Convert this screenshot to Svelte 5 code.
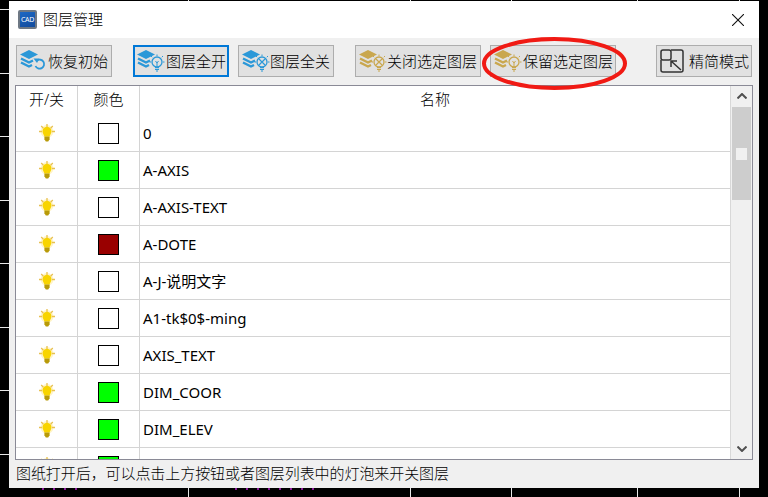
<script lang="ts">
	const gridX = [188, 410, 511, 637, 739];
	const gridY = [9, 73, 136, 200, 263, 327, 390, 454];

	const GREEN = '#00ff00';
	const layers = [
		{ color: '#ffffff', name: '0' },
		{ color: GREEN, name: 'A-AXIS' },
		{ color: '#ffffff', name: 'A-AXIS-TEXT' },
		{ color: '#990000', name: 'A-DOTE' },
		{ color: '#ffffff', name: 'A-J-说明文字' },
		{ color: '#ffffff', name: 'A1-tk$0$-ming' },
		{ color: '#ffffff', name: 'AXIS_TEXT' },
		{ color: GREEN, name: 'DIM_COOR' },
		{ color: GREEN, name: 'DIM_ELEV' },
		{ color: GREEN, name: '' }
	];

	const BLUE = '#2b98d8';
	const GOLD = '#c9a74e';
</script>

{#snippet stack(c)}
	<path d="M9 1 L18 5.5 L9 10 L0 5.5 Z" fill={c} />
	<path d="M1 9.5 L9 13.5 L13 11.5" fill="none" stroke={c} stroke-width="2.4" />
	<path d="M1 13.5 L9 17.5 L12 16" fill="none" stroke={c} stroke-width="2.4" />
{/snippet}

{#snippet bulbBadge(c, crossed)}
	<circle cx="20" cy="13" r="5" fill="none" stroke={c} stroke-width="1.3" />
	<path d="M18 18.5 H22 M18 20.3 H22 M19 22 H21" stroke={c} stroke-width="1.2" />
	{#if crossed}
		<path d="M17 10 L23 16 M23 10 L17 16" stroke={c} stroke-width="1.2" />
	{:else}
		<path d="M18.5 12 L20 14 L21.5 12 M20 14 V18" fill="none" stroke={c} stroke-width="1" />
	{/if}
	<path d="M20 5.5 V7 M14 7 L15.2 8.2 M26 7 L24.8 8.2 M12.5 13 H14 M26 13 H27.5" stroke={c} stroke-width="1" />
{/snippet}

{#snippet bulb()}
	<svg class="bulb" viewBox="0 0 16 18" width="16" height="18" aria-hidden="true">
		<circle cx="8" cy="7.5" r="6.5" fill="#fff4c8" />
		<path d="M8 0 V3 M2.2 2 L4.4 4.2 M13.8 2 L11.6 4.2 M0 7.5 H3 M13 7.5 H16" stroke="#e8c050" stroke-width="1.3" />
		<path d="M8 2.8 C5 2.8 3.5 5 3.5 7.2 C3.5 9.4 5 10.4 5.4 12.5 H10.6 C11 10.4 12.5 9.4 12.5 7.2 C12.5 5 11 2.8 8 2.8 Z" fill="#f8d400" />
		<path d="M5.4 12.5 H10.6 V15.2 L9.2 17.5 H6.8 L5.4 15.2 Z" fill="#b89a08" />
	</svg>
{/snippet}

<div class="desk">
	{#each gridX as x}
		<i class="vline" style="left: {x}px"></i>
	{/each}
	{#each gridY as y}
		<i class="hline" style="top: {y}px"></i>
	{/each}
	<i class="cut" style="left: 42px; width: 42px"></i>
	<i class="cut" style="left: 235px; width: 87px"></i>

	<div class="window">
		<header class="titlebar">
			<span class="logo">CAD</span>
			<span class="title">图层管理</span>
			<svg class="close" viewBox="0 0 12 12" width="12" height="12" aria-hidden="true">
				<path d="M0 0 L12 12 M12 0 L0 12" stroke="#111" stroke-width="1.1" />
			</svg>
		</header>

		<div class="toolbar">
			<button class="tool">
				<svg viewBox="0 0 28 24" width="28" height="24" aria-hidden="true">
					{@render stack(BLUE)}
					<path d="M17 11.5 A4.5 4.5 0 1 1 15.5 17" fill="none" stroke={BLUE} stroke-width="1.8" />
					<path d="M13.5 9.5 L19.5 9.5 L17 14 Z" fill={BLUE} />
				</svg>
				<span>恢复初始</span>
			</button>
			<button class="tool active gap-l">
				<svg viewBox="0 0 28 24" width="28" height="24" aria-hidden="true">
					{@render stack(BLUE)}
					{@render bulbBadge(BLUE, false)}
				</svg>
				<span>图层全开</span>
			</button>
			<button class="tool gap-s">
				<svg viewBox="0 0 28 24" width="28" height="24" aria-hidden="true">
					{@render stack(BLUE)}
					{@render bulbBadge(BLUE, true)}
				</svg>
				<span>图层全关</span>
			</button>
			<button class="tool wide gap-l">
				<svg viewBox="0 0 28 24" width="28" height="24" aria-hidden="true">
					{@render stack(GOLD)}
					{@render bulbBadge(GOLD, true)}
				</svg>
				<span>关闭选定图层</span>
			</button>
			<button class="tool wide gap-s">
				<svg viewBox="0 0 28 24" width="28" height="24" aria-hidden="true">
					{@render stack(GOLD)}
					{@render bulbBadge(GOLD, false)}
				</svg>
				<span>保留选定图层</span>
			</button>
			<button class="tool push">
				<svg viewBox="0 0 24 24" width="24" height="24" aria-hidden="true">
					<path d="M11 1 H21 Q23 1 23 3 V21 Q23 23 21 23 H3 Q1 23 1 21 V11" fill="none" stroke="#333" stroke-width="1.5" />
					<rect x="1" y="1" width="10" height="10" rx="2" fill="none" stroke="#333" stroke-width="1.5" />
					<path d="M11 18 V12 H17 M11 12 L21 21" fill="none" stroke="#333" stroke-width="1.5" />
				</svg>
				<span>精简模式</span>
			</button>
		</div>

		<div class="table">
			<div class="list">
				<div class="row head">
					<span class="cell">开/关</span>
					<span class="cell">颜色</span>
					<span class="cell">名称</span>
				</div>
				{#each layers as layer}
					<div class="row">
						<span class="cell">{@render bulb()}</span>
						<span class="cell"><i class="swatch" style="background: {layer.color}"></i></span>
						<span class="cell name">{layer.name}</span>
					</div>
				{/each}
			</div>
			<div class="scrollbar">
				<svg class="chev" viewBox="0 0 10 6" width="10" height="6" aria-hidden="true">
					<path d="M0.5 5.5 L5 1 L9.5 5.5" fill="none" stroke="#505050" stroke-width="2" />
				</svg>
				<div class="thumb"><i class="grip"></i></div>
				<svg class="chev down" viewBox="0 0 10 6" width="10" height="6" aria-hidden="true">
					<path d="M0.5 0.5 L5 5 L9.5 0.5" fill="none" stroke="#505050" stroke-width="2" />
				</svg>
			</div>
		</div>

		<footer class="status">图纸打开后，可以点击上方按钮或者图层列表中的灯泡来开关图层</footer>
	</div>

	<svg class="mark" viewBox="0 0 768 497" width="768" height="497" aria-hidden="true">
		<ellipse cx="554.5" cy="63.5" rx="70.5" ry="24.5" fill="none" stroke="#f01a14" stroke-width="4" />
	</svg>
</div>

<style>
	:global(body) {
		margin: 0;
		background: #000;
	}

	.desk {
		position: relative;
		width: 768px;
		height: 497px;
		overflow: hidden;
		background: #000;
		font-family: 'Noto Sans', 'Noto Sans CJK SC', sans-serif;
		font-size: 15px;
		color: #000;
	}

	.vline {
		position: absolute;
		top: 0;
		bottom: 0;
		width: 1px;
		background: #e8e8e8;
	}

	.hline {
		position: absolute;
		left: 0;
		width: 9px;
		height: 1px;
		background: #e8e8e8;
	}

	.cut {
		position: absolute;
		top: 488px;
		height: 2px;
		background: repeating-linear-gradient(90deg, #8a1a9a 0 2px, transparent 2px 11px);
	}

	.window {
		position: absolute;
		left: 9px;
		top: 1px;
		width: 750px;
		height: 487px;
		display: flex;
		flex-direction: column;
		background: #f0f0f0;
	}

	.titlebar {
		height: 37px;
		flex: none;
		display: flex;
		align-items: center;
		padding: 0 15px 0 9px;
		background: #fff;
	}

	.logo {
		width: 19px;
		height: 19px;
		box-sizing: border-box;
		display: flex;
		align-items: center;
		justify-content: center;
		background: linear-gradient(160deg, #1c68c4, #124a9c);
		border: 2px solid #6e7884;
		border-radius: 2px;
		color: #fff;
		font-size: 7px;
		font-weight: 400;
		letter-spacing: -0.3px;
	}

	.title {
		margin-left: 6px;
		flex: 1;
		padding-bottom: 2px;
		line-height: 20px;
		font-weight: 300;
	}

	.toolbar {
		height: 47px;
		flex: none;
		box-sizing: border-box;
		display: flex;
		align-items: flex-start;
		padding: 7px 7px 0;
	}

	.tool {
		width: 96px;
		height: 32px;
		box-sizing: border-box;
		display: flex;
		align-items: center;
		gap: 0;
		padding: 0 0 0 3px;
		background: #e1e1e1;
		border: 1px solid #adadad;
		font: inherit;
		font-weight: 300;
		white-space: nowrap;
		color: #000;
	}

	.tool span {
		padding-bottom: 2px;
	}

	.tool svg {
		flex: none;
	}

	.wide {
		width: 126px;
	}

	.active {
		border: 2px solid #0078d7;
		padding-left: 2px;
		gap: 1px;
	}

	.gap-l {
		margin-left: 21px;
	}

	.gap-s {
		margin-left: 9px;
	}

	.wide.gap-s {
		gap: 1px;
	}

	.push {
		margin-left: auto;
		gap: 5px;
	}

	.table {
		flex: 1;
		min-height: 0;
		margin: 0 6px 0 6px;
		display: flex;
		border: 1px solid #8a8a96;
		background: #fff;
	}

	.list {
		flex: 1;
		min-width: 0;
		overflow: hidden;
		border-right: 1px solid #d8d8d8;
	}

	.row {
		height: 37px;
		box-sizing: border-box;
		display: grid;
		grid-template-columns: 62px 62px 1fr;
		border-bottom: 1px solid #d4d4d4;
	}

	.row.head {
		height: 29px;
		border-bottom: 0;
		font-weight: 300;
	}

	.cell {
		display: flex;
		align-items: center;
		justify-content: center;
		border-right: 1px solid #d4d4d4;
		line-height: 1;
	}

	.head .cell {
		padding-bottom: 2px;
	}

	.cell:last-child {
		border-right: 0;
	}

	.name {
		justify-content: flex-start;
		padding-left: 3px;
	}

	.swatch {
		display: block;
		width: 21px;
		height: 21px;
		box-sizing: border-box;
		border: 1px solid #000;
	}

	.scrollbar {
		width: 21px;
		flex: none;
		display: flex;
		flex-direction: column;
		align-items: center;
		background: #f0f0f0;
	}

	.chev {
		flex: none;
		margin-top: 7px;
	}

	.chev.down {
		margin-top: auto;
		margin-bottom: 7px;
	}

	.thumb {
		width: 19px;
		height: 93px;
		margin-top: 8px;
		display: flex;
		align-items: center;
		justify-content: center;
		background: #cdcdcd;
	}

	.grip {
		display: block;
		width: 11px;
		height: 12px;
		background: #f0f0f0;
	}

	.status {
		height: 28px;
		flex: none;
		box-sizing: border-box;
		padding: 0 0 0 7px;
		line-height: 26px;
		letter-spacing: -0.07px;
		font-weight: 300;
	}

	.mark {
		position: absolute;
		inset: 0;
		pointer-events: none;
	}
</style>
